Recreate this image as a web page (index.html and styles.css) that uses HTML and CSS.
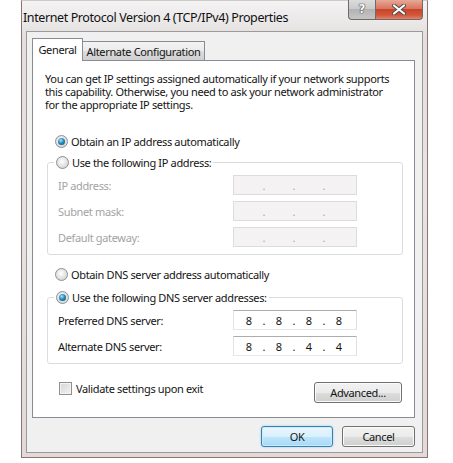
FILE: index.html
```html
<!DOCTYPE html>
<html>
<head>
<meta charset="utf-8">
<link rel="stylesheet" href="styles.css">
</head>
<body>
<div class="window">
  <div class="titlebar">
    <span class="title">Internet Protocol Version 4 (TCP/IPv4) Properties</span>
    <div class="caption-btns">
      <div class="cbtn help"><span class="qmark">?</span></div>
      <div class="cbtn close">
        <svg width="14" height="11" viewBox="0 0 14 11">
          <path d="M2 1.5 L12 9.5 M12 1.5 L2 9.5" stroke="#4a4a4a" stroke-width="4" stroke-linecap="round"/>
          <path d="M2 1.5 L12 9.5 M12 1.5 L2 9.5" stroke="#ffffff" stroke-width="2.2" stroke-linecap="round"/>
        </svg>
      </div>
    </div>
  </div>
  <div class="client">
    <div class="tabs">
      <div class="tab active">General</div>
      <div class="tab alt">Alternate Configuration</div>
    </div>
    <div class="panel">
      <p class="intro">You can get IP settings assigned automatically if your network supports<br>this capability. Otherwise, you need to ask your network administrator<br>for the appropriate IP settings.</p>
      <div class="opt r1"><span class="radio checked"></span><span>Obtain an IP address automatically</span></div>
      <fieldset class="group g1">
        <legend><span class="radio"></span><span>Use the following IP address:</span></legend>
        <div class="row dis"><span class="lbl">IP address:</span>
          <div class="ipfield off"><span class="oct"></span><span class="dot">.</span><span class="oct"></span><span class="dot">.</span><span class="oct"></span><span class="dot">.</span><span class="oct"></span></div>
        </div>
        <div class="row dis"><span class="lbl">Subnet mask:</span>
          <div class="ipfield off"><span class="oct"></span><span class="dot">.</span><span class="oct"></span><span class="dot">.</span><span class="oct"></span><span class="dot">.</span><span class="oct"></span></div>
        </div>
        <div class="row dis"><span class="lbl">Default gateway:</span>
          <div class="ipfield off"><span class="oct"></span><span class="dot">.</span><span class="oct"></span><span class="dot">.</span><span class="oct"></span><span class="dot">.</span><span class="oct"></span></div>
        </div>
      </fieldset>
      <div class="opt r3"><span class="radio"></span><span>Obtain DNS server address automatically</span></div>
      <fieldset class="group g2">
        <legend><span class="radio checked"></span><span>Use the following DNS server addresses:</span></legend>
        <div class="row"><span class="lbl">Preferred DNS server:</span>
          <div class="ipfield"><span class="oct">8</span><span class="dot">.</span><span class="oct">8</span><span class="dot">.</span><span class="oct">8</span><span class="dot">.</span><span class="oct">8</span></div>
        </div>
        <div class="row"><span class="lbl">Alternate DNS server:</span>
          <div class="ipfield"><span class="oct">8</span><span class="dot">.</span><span class="oct">8</span><span class="dot">.</span><span class="oct">4</span><span class="dot">.</span><span class="oct">4</span></div>
        </div>
      </fieldset>
      <div class="bottom-row">
        <div class="check-opt"><span class="checkbox"></span><span>Validate settings upon exit</span></div>
        <div class="btn adv">Advanced...</div>
      </div>
    </div>
    <div class="buttons">
      <div class="btn ok">OK</div>
      <div class="btn cancel">Cancel</div>
    </div>
  </div>
</div>
</body>
</html>
```

FILE: styles.css
```css
* { box-sizing: border-box; }
html, body { margin: 0; padding: 0; background: #ffffff; }
body {
  font-family: "Noto Sans", "Open Sans", sans-serif;
  font-size: 11px;
  letter-spacing: -0.35px;
  color: #141414;
}
.window {
  margin-left: 21px;
  width: 407px;
  height: 458px;
  border: 1px solid #8a7571;
  border-top-color: #cfcaca;
  background: linear-gradient(180deg, #f4f3f3 0%, #e3dfdf 8%, #e8e3e3 40%, #e2d9d8 100%);
  padding: 0 4px 4px 4px;
  display: flex;
  flex-direction: column;
}
.titlebar {
  height: 30px;
  display: flex;
  align-items: flex-start;
  flex: none;
}
.title {
  margin: 8px 0 0 -3px;
  font-size: 12.5px;
  letter-spacing: -0.4px;
  color: #111;
  white-space: nowrap;
}
.caption-btns {
  margin-left: auto;
  margin-top: -1px;
  display: flex;
}
.cbtn {
  height: 20px;
  display: flex;
  align-items: center;
  justify-content: center;
  border: 1px solid #6f6a6a;
  border-top: none;
}
.help {
  width: 27px;
  border-right: none;
  border-radius: 0 0 0 4px;
  background: linear-gradient(180deg, #dcdcdc 0%, #cbcbcb 45%, #b3b3b3 50%, #c6c6c6 100%);
}
.qmark {
  font-family: "DejaVu Sans", sans-serif;
  font-weight: bold;
  font-size: 12px;
  letter-spacing: 0;
  color: #ffffff;
  text-shadow: 0 0 1px #333, 0 0 1px #333, 0 0 1px #333;
  margin-top: -2px;
}
.close {
  width: 48px;
  border-radius: 0 0 4px 0;
  background: linear-gradient(180deg, #e8a898 0%, #d9765f 45%, #c8452b 50%, #d2563a 80%, #e2866c 100%);
}
.close svg { display: block; margin-top: -1px; }
.client {
  flex: 1;
  border: 1px solid #9a9a9a;
  background: #f0f0f0;
  padding: 6px 7px 0 5px;
  display: flex;
  flex-direction: column;
}
.tabs {
  height: 22px;
  display: flex;
  align-items: flex-end;
  flex: none;
}
.tab {
  height: 19px;
  border: 1px solid #898c95;
  border-bottom: none;
  background: linear-gradient(180deg, #f3f3f3 0%, #ebebeb 50%, #dddddd 51%, #cfcfcf 100%);
  display: flex;
  align-items: center;
  justify-content: center;
  white-space: nowrap;
}
.tab.alt {
  width: 123px;
  margin-left: -1px;
}
.tab.active {
  width: 51px;
  height: 23px;
  margin-bottom: -1px;
  background: #ffffff;
  position: relative;
  z-index: 1;
  padding-bottom: 2px;
}
.panel {
  height: 358px;
  flex: none;
  background: #ffffff;
  border: 1px solid #898c95;
  padding: 0 11px 0 12px;
  display: flex;
  flex-direction: column;
}
.intro {
  margin: 11px 0 0 0;
  line-height: 13px;
  white-space: nowrap;
}
.opt {
  display: flex;
  align-items: center;
  height: 16px;
  margin-left: 10px;
}
.r1 { margin-top: 22px; }
.r3 { margin-top: 11px; }
.radio {
  width: 13px;
  height: 13px;
  border-radius: 50%;
  border: 1px solid #8e8f8f;
  background: radial-gradient(circle at 45% 40%, #ffffff 0%, #e6e6e6 45%, #c9c9c9 100%);
  display: flex;
  align-items: center;
  justify-content: center;
  flex: none;
  margin-right: 3px;
}
.radio.checked::after {
  content: "";
  width: 7px;
  height: 7px;
  border-radius: 50%;
  background: radial-gradient(circle at 40% 35%, #9ee6ff 0%, #2a8cbc 45%, #0b3f5e 100%);
}
.group {
  margin: 5px 0 0 2px;
  border: 1px solid #d9dde0;
  border-radius: 3px;
  padding: 5px 10px 7px 10px;
  min-width: 0;
}
.group legend {
  display: flex;
  align-items: center;
  height: 16px;
  padding: 0 2px 0 2px;
  margin-left: -4px;
}
.g2 { margin-top: 7px; }
.row {
  display: flex;
  align-items: center;
  height: 20px;
}
.row + .row { margin-top: 6px; }
.lbl { width: 175px; }
.row.dis .lbl { color: #a3a3a3; }
.ipfield {
  width: 124px;
  height: 20px;
  border: 1px solid;
  border-color: #abadb3 #dbdfe6 #e3e9ef #e2e3ea;
  background: #ffffff;
  display: flex;
  align-items: center;
  padding-left: 2px;
  letter-spacing: 0;
}
.ipfield.off {
  background: #f4f2f2;
  border-color: #dcdcdc;
  color: #a8a8a8;
}
.oct { width: 26px; text-align: center; }
.dot { width: 4px; text-align: center; }
.bottom-row {
  margin-top: 16px;
  display: flex;
  align-items: flex-start;
}
.check-opt {
  display: flex;
  align-items: center;
  height: 16px;
  margin-left: 14px;
}
.checkbox {
  width: 13px;
  height: 13px;
  border: 1px solid #8e8f8f;
  background: linear-gradient(135deg, #d6d6d6 0%, #f2f2f2 100%);
  box-shadow: inset 0 0 0 1px #f4f4f4;
  margin-right: 4px;
  flex: none;
}
.btn {
  height: 21px;
  border: 1px solid #707070;
  border-radius: 3px;
  background: linear-gradient(180deg, #f2f2f2 0%, #ebebeb 50%, #dddddd 51%, #cfcfcf 100%);
  box-shadow: inset 0 0 0 1px #fbfbfb;
  display: flex;
  align-items: center;
  justify-content: center;
  color: #141414;
}
.adv {
  margin-left: auto;
  margin-top: 2px;
  margin-right: 1px;
  width: 88px;
}
.buttons {
  margin-top: 8px;
  display: flex;
  justify-content: flex-end;
  gap: 9px;
}
.ok {
  width: 72px;
  border-color: #3c7fb1;
  background: linear-gradient(180deg, #eaf6fd 0%, #d9f0fc 50%, #bee6fd 51%, #a7d9f5 100%);
  box-shadow: inset 0 0 0 1px #c8ecfb, 0 0 2px #7fc6ea;
}
.cancel { width: 73px; }
```
